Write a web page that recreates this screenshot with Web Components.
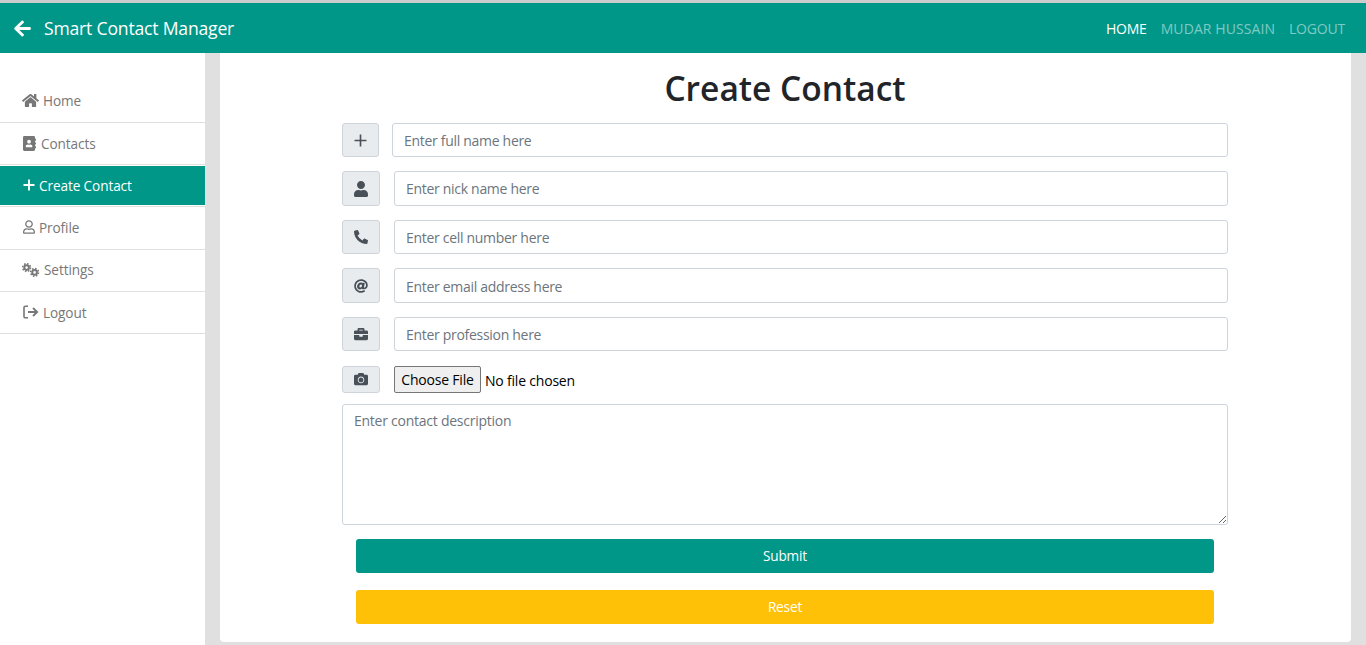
<!DOCTYPE html>
<html lang="en"><head><meta charset="utf-8"><title>Create Contact</title>
<style>
html,body{margin:0;height:645px;overflow:hidden;background:#e0e0e0;font-family:"Open Sans","Noto Sans",sans-serif;}
body{display:flex;flex-direction:column;}
</style></head><body>
<app-navbar></app-navbar>
<app-layout>
  <app-sidebar slot="side"></app-sidebar>
  <contact-form></contact-form>
</app-layout>
<script>
const I={
user:['0 0 448 512','M224 256c70.7 0 128-57.3 128-128S294.7 0 224 0 96 57.3 96 128s57.3 128 128 128zm89.6 32h-16.7c-22.2 10.2-46.9 16-72.9 16s-50.6-5.8-72.9-16h-16.7C60.2 288 0 348.2 0 422.4V464c0 26.5 21.5 48 48 48h352c26.5 0 48-21.5 48-48v-41.6c0-74.2-60.2-134.4-134.4-134.4z'],
userO:['0 0 448 512','M313.6 304c-28.7 0-42.5 16-89.6 16-47.1 0-60.8-16-89.6-16C60.2 304 0 364.2 0 438.4V464c0 26.5 21.5 48 48 48h352c26.5 0 48-21.5 48-48v-25.6c0-74.2-60.2-134.4-134.4-134.4zM400 464H48v-25.6c0-47.6 38.8-86.4 86.4-86.4 14.6 0 38.3 16 89.6 16 51.7 0 74.9-16 89.6-16 47.6 0 86.4 38.8 86.4 86.4V464zM224 288c79.5 0 144-64.5 144-144S303.5 0 224 0 80 64.5 80 144s64.5 144 144 144zm0-240c52.9 0 96 43.1 96 96s-43.1 96-96 96-96-43.1-96-96 43.1-96 96-96z'],
phone:['0 0 512 512','M497.39 361.8l-112-48a24 24 0 0 0-28 6.9l-49.6 60.6A370.66 370.66 0 0 1 130.6 204.11l60.6-49.6a23.94 23.94 0 0 0 6.9-28l-48-112A24.16 24.16 0 0 0 122.6.61l-104 24A24 24 0 0 0 0 48c0 256.5 207.9 464 464 464a24 24 0 0 0 23.4-18.6l24-104a24.29 24.29 0 0 0-14.01-27.6z'],
at:['0 0 512 512','M256 8C118.941 8 8 118.919 8 256c0 137.059 110.919 248 248 248 48.154 0 95.342-14.14 135.408-40.223 12.005-7.815 14.625-24.288 5.552-35.372l-10.177-12.433c-7.671-9.371-21.179-11.667-31.373-5.129C325.92 429.757 291.314 440 256 440c-101.458 0-184-82.542-184-184S154.542 72 256 72c100.139 0 184 57.619 184 160 0 38.786-21.093 79.742-58.17 83.693-17.349-.454-16.91-12.857-13.476-30.024l23.433-121.11C394.653 149.75 383.308 136 368.225 136h-44.981a13.518 13.518 0 0 0-13.432 11.993l-.01.092c-14.697-17.901-40.448-21.775-59.971-21.775-74.58 0-137.831 62.234-137.831 151.46 0 65.303 36.785 105.87 96 105.87 26.984 0 57.369-15.637 74.991-38.333 9.522 34.104 40.613 34.103 70.71 34.103C462.609 379.41 504 307.798 504 232 504 95.653 394.023 8 256 8zm-21.68 304.43c-22.249 0-36.07-15.623-36.07-40.771 0-44.993 30.779-72.729 58.63-72.729 22.292 0 35.601 15.241 35.601 40.77 0 45.061-33.875 72.73-58.161 72.73z'],
brief:['0 0 512 512','M320 336c0 8.84-7.16 16-16 16h-96c-8.84 0-16-7.16-16-16v-48H0v144c0 25.6 22.4 48 48 48h416c25.6 0 48-22.4 48-48V288H320v48zm144-208h-80V80c0-25.6-22.4-48-48-48H176c-25.6 0-48 22.4-48 48v48H48c-25.6 0-48 22.4-48 48v80h512v-80c0-25.6-22.4-48-48-48zm-144 0H192V96h128v32z'],
camera:['0 0 512 512','M512 144v288c0 26.5-21.5 48-48 48H48c-26.5 0-48-21.5-48-48V144c0-26.5 21.5-48 48-48h88l12.3-32.9c7-18.7 24.9-31.1 44.9-31.1h125.5c20 0 37.9 12.4 44.9 31.1L376 96h88c26.5 0 48 21.5 48 48zM376 288c0-66.2-53.8-120-120-120s-120 53.8-120 120 53.8 120 120 120 120-53.8 120-120zm-32 0c0 48.5-39.5 88-88 88s-88-39.5-88-88 39.5-88 88-88 88 39.5 88 88z'],
home:['0 0 576 512','M280.37 148.26L96 300.11V464a16 16 0 0 0 16 16l112.06-.29a16 16 0 0 0 15.92-16V368a16 16 0 0 1 16-16h64a16 16 0 0 1 16 16v95.64a16 16 0 0 0 16 16.05L464 480a16 16 0 0 0 16-16V300L295.67 148.26a12.19 12.19 0 0 0-15.3 0zM571.6 251.47L488 182.56V44.05a12 12 0 0 0-12-12h-56a12 12 0 0 0-12 12v72.61L318.47 43a48 48 0 0 0-61 0L4.34 251.47a12 12 0 0 0-1.6 16.9l25.5 31A12 12 0 0 0 45.15 301l235.22-193.74a12.19 12.19 0 0 1 15.3 0L530.9 301a12 12 0 0 0 16.9-1.6l25.5-31a12 12 0 0 0-1.7-16.93z'],
book:['0 0 448 512','M436 160c6.6 0 12-5.4 12-12v-40c0-6.6-5.4-12-12-12h-20V48c0-26.5-21.5-48-48-48H48C21.5 0 0 21.5 0 48v416c0 26.5 21.5 48 48 48h320c26.5 0 48-21.5 48-48v-48h20c6.6 0 12-5.4 12-12v-40c0-6.6-5.4-12-12-12h-20v-64h20c6.6 0 12-5.4 12-12v-40c0-6.6-5.4-12-12-12h-20v-64h20zm-228-32c35.3 0 64 28.7 64 64s-28.7 64-64 64-64-28.7-64-64 28.7-64 64-64zm112 236.8c0 10.6-10 19.2-22.4 19.2H118.4C106 384 96 375.4 96 364.8v-19.2c0-31.8 30.1-57.6 67.2-57.6h5c12.3 5.1 25.7 8 39.8 8s27.6-2.9 39.8-8h5c37.1 0 67.2 25.8 67.2 57.6v19.2z'],
arrow:['0 0 448 512','M257.5 445.1l-22.2 22.2c-9.4 9.4-24.6 9.4-33.9 0L7 273c-9.4-9.4-9.4-24.6 0-33.9L201.4 44.7c9.4-9.4 24.6-9.4 33.9 0l22.2 22.2c9.5 9.5 9.3 25-.4 34.3L136.6 216H424c13.3 0 24 10.7 24 24v32c0 13.3-10.7 24-24 24H136.6l120.5 114.8c9.8 9.3 10 24.8.4 34.3z']
};
function svg(n,w,h){const[v,d]=I[n];return `<svg width="${w}" height="${h}" viewBox="${v}" fill="currentColor" aria-hidden="true"><path d="${d}"/></svg>`;}
const thinPlus=(s,sw)=>`<svg width="${s}" height="${s}" viewBox="0 0 12 12" fill="none" stroke="currentColor" stroke-width="${sw}" aria-hidden="true"><path d="M6 .5v11M.5 6h11"/></svg>`;
const gears=`<svg width="18" height="14" viewBox="0 0 18 14" fill="none" stroke="currentColor" aria-hidden="true"><circle cx="4.6" cy="4.6" r="2.3" stroke-width="2"/><circle cx="4.6" cy="4.6" r="3.9" stroke-width="1.5" stroke-dasharray="1.55 1.51"/><circle cx="12.6" cy="9.4" r="2.3" stroke-width="2"/><circle cx="12.6" cy="9.4" r="3.9" stroke-width="1.5" stroke-dasharray="1.55 1.51"/></svg>`;
const signout=`<svg width="16" height="14" viewBox="0 0 16 14" fill="none" stroke="currentColor" stroke-width="1.6" aria-hidden="true"><path d="M5 1.2H2.4A1.4 1.4 0 0 0 1 2.6v8.8a1.4 1.4 0 0 0 1.4 1.4H5"/><path d="M5 7h9M10 3l4.2 4L10 11" stroke-width="1.8"/></svg>`;

function def(name,html){customElements.define(name,class extends HTMLElement{
  constructor(){super();this.attachShadow({mode:'open'}).innerHTML=typeof html==='function'?html(this):html;}
});}

def('app-navbar',`<style>
:host{display:flex;align-items:center;flex:none;height:50px;background:#009688;border-top:3px solid #ccc;color:#fff;padding:0 21px 0 14px;justify-content:space-between}
.b{display:flex;align-items:center;gap:13px;font-size:17.6px;line-height:26px;letter-spacing:-.2px}
svg{display:block}
nav{display:flex;gap:14px;font-size:14px;letter-spacing:-.2px}
a{color:rgba(255,255,255,.5);text-decoration:none}a.on{color:#fff}
a:nth-child(2){letter-spacing:.08px}
</style><div class="b">${svg('arrow',17,19)}<span>Smart Contact Manager</span></div>
<nav><a class="on" href="#">HOME</a><a href="#">MUDAR HUSSAIN</a><a href="#">LOGOUT</a></nav>`);

def('app-layout',`<style>
:host{display:flex;flex:1;min-height:0}
.s{flex:none;width:205px;background:#fff}
.m{flex:1;min-width:0;padding:0 15px 3px}
</style><div class="s"><slot name="side"></slot></div><div class="m"><slot></slot></div>`);

def('side-item',`<style>
:host{display:flex;align-items:center;box-sizing:border-box;height:42.25px;border-bottom:1px solid #e0e0e0;padding-left:22px;padding-bottom:1px;color:#777;font-size:13.6px;letter-spacing:-.1px}
:host([low]){padding-bottom:0}
:host([active]){background:#009688;background-clip:padding-box;color:#fff;border-top:1px solid #fff;box-shadow:inset 0 -1px 0 #fff;padding-bottom:2px}
span{display:inline-flex;align-items:center;gap:var(--g,4px)}
::slotted(svg){display:block}
</style><span><slot name="i"></slot><slot></slot></span>`);

def('app-sidebar',`<style>:host{display:block;padding-top:27.5px}</style>
<side-item><svg slot="i" width="17" height="15" viewBox="${I.home[0]}" fill="currentColor"><path d="${I.home[1]}"/></svg>Home</side-item>
<side-item low style="--g:5px;padding-left:23px"><svg slot="i" width="13" height="15" viewBox="${I.book[0]}" fill="currentColor"><path d="${I.book[1]}"/></svg>Contacts</side-item>
<side-item active style="--g:4px;padding-left:23px"><span slot="i" style="display:block;line-height:0">${thinPlus(12,1.9)}</span>Create Contact</side-item>
<side-item style="--g:4px;padding-left:23px"><svg slot="i" width="12" height="14" viewBox="${I.userO[0]}" fill="currentColor"><path d="${I.userO[1]}"/></svg>Profile</side-item>
<side-item style="--g:4px"><span slot="i" style="display:block;line-height:0">${gears}</span>Settings</side-item>
<side-item low style="--g:4px;padding-left:23px"><span slot="i" style="display:block;line-height:0">${signout}</span>Logout</side-item>`);

def('input-addon',h=>`<style>
:host{display:flex;align-items:center;justify-content:center;flex:none;box-sizing:border-box;width:${h.getAttribute('w')||38}px;background:#e9ecef;border:1px solid #ced4da;border-radius:3px;color:#495057}
svg{display:block}
</style><slot></slot>`);

def('text-field',h=>`<style>
:host{display:flex;gap:14px;height:34.5px}
input{flex:1;min-width:0;box-sizing:border-box;border:1px solid #ced4da;border-radius:3px;padding:${h.hasAttribute('low')?'1px':'0'} 11px 0;font:14px "Open Sans","Noto Sans",sans-serif;letter-spacing:-.3px;color:#495057;background:#fff;outline:none}
input::placeholder{color:#6c757d;opacity:1}
</style><slot></slot><input type="text" placeholder="${h.getAttribute('placeholder')}">`);

def('file-field',`<style>
:host{display:flex;gap:14px;height:27px;align-items:stretch}
.c{display:flex;align-items:center;font:14px "Open Sans","Noto Sans",sans-serif;letter-spacing:-.2px;color:#000}
button{box-sizing:border-box;width:87px;height:27px;margin-right:4px;padding:0;background:#efefef;border:1px solid #767676;border-radius:2px;font:inherit;letter-spacing:inherit;color:#000}
span{position:relative;top:1px}
</style><slot></slot><div class="c"><button type="button">Choose File</button><span>No file chosen</span></div>`);

def('desc-field',`<style>
:host{display:block;height:121px}
textarea{display:block;width:100%;height:121px;box-sizing:border-box;border:1px solid #ced4da;border-radius:3px;padding:6px 11px;font:14px/20px "Open Sans","Noto Sans",sans-serif;letter-spacing:-.25px;color:#495057;background:#fff;outline:none;margin:0}
textarea::placeholder{color:#6c757d;opacity:1}
</style><textarea placeholder="Enter contact description"></textarea>`);

def('action-button',h=>`<style>
:host{display:block;margin:0 14px}
button{display:block;box-sizing:border-box;width:100%;height:34.5px;border:0;border-radius:3px;background:${h.getAttribute('color')};color:#fff;font:13.6px "Open Sans","Noto Sans",sans-serif;letter-spacing:-.15px;padding:0 0 2px}
</style><button type="button"><slot></slot></button>`);

def('contact-form',`<style>
:host{display:block;box-sizing:border-box;height:589px;padding-right:1px;background:#fff;border-radius:0 0 4px 4px}
form{width:886px;margin:0 auto;padding-top:11.8px;display:flex;flex-direction:column}
h1{margin:0 0 11px;text-align:center;font:600 33.5px/47px "Open Sans","Noto Sans",sans-serif;color:#212529}
.r{display:flex;flex-direction:column;gap:14px}
.r file-field{margin-top:.5px}
.f{margin-top:11px}.a{margin-top:14px}.b{margin-top:16.5px}
</style><form>
<h1>Create Contact</h1>
<div class="r">
<text-field placeholder="Enter full name here" style="gap:13px"><input-addon w="37">${thinPlus(13,1.5)}</input-addon></text-field>
<text-field placeholder="Enter nick name here"><input-addon>${svg('user',14,16)}</input-addon></text-field>
<text-field low placeholder="Enter cell number here"><input-addon>${svg('phone',14,14)}</input-addon></text-field>
<text-field low placeholder="Enter email address here"><input-addon>${svg('at',14,14)}</input-addon></text-field>
<text-field placeholder="Enter profession here"><input-addon>${svg('brief',14,14)}</input-addon></text-field>
<file-field><input-addon>${svg('camera',14,14)}</input-addon></file-field>
</div>
<desc-field class="f"></desc-field>
<action-button class="a" color="#009688">Submit</action-button>
<action-button class="b" color="#ffc107">Reset</action-button>
</form>`);
</script>
</body></html>
